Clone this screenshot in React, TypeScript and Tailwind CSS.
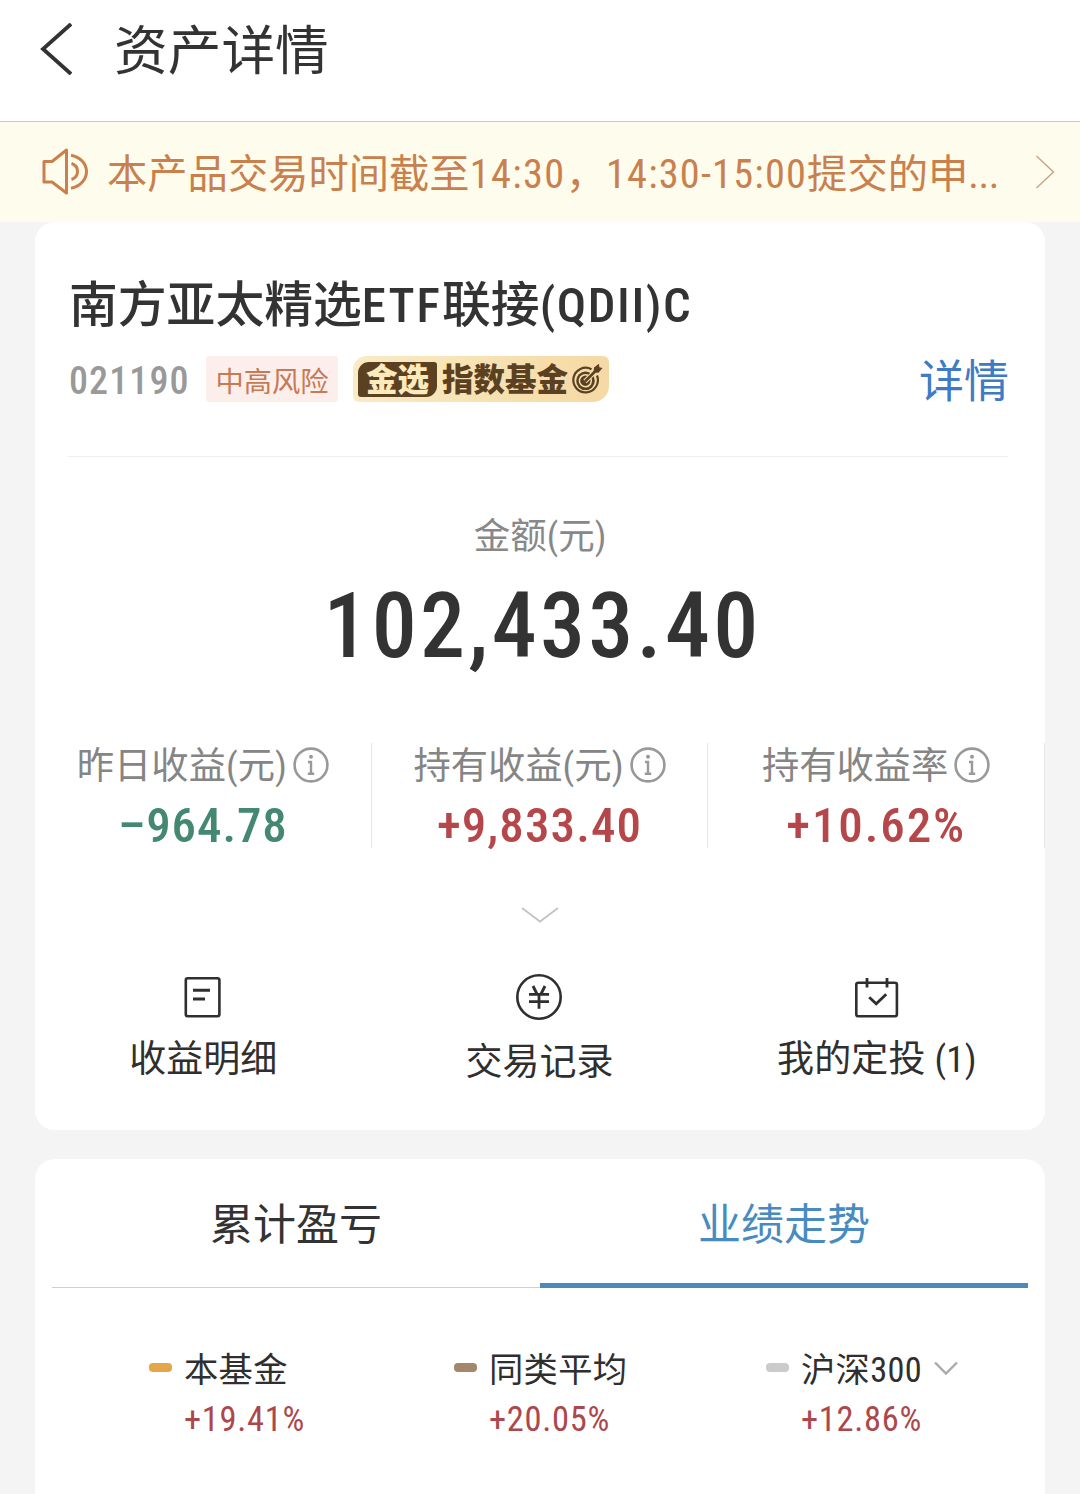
import React from 'react';

interface Stat {
  label: string;
  value: string;
  color: string;
}

interface Legend {
  name: string;
  value: string;
  dot: string;
  pos: string;
  hasMenu?: boolean;
}

const stats: Stat[] = [
  { label: '昨日收益(元)', value: '–964.78', color: 'text-[#44896f] tracking-[0.9px]' },
  { label: '持有收益(元)', value: '+9,833.40', color: 'text-[#b5464a] tracking-[1.1px]' },
  { label: '持有收益率', value: '+10.62%', color: 'text-[#b5464a] tracking-[1.9px]' },
];

const legends: Legend[] = [
  { name: '本基金', value: '+19.41%', dot: 'bg-[#e3a648]', pos: 'w-[305px]' },
  { name: '同类平均', value: '+20.05%', dot: 'bg-[#a3876a]', pos: 'w-[312px]' },
  { name: '沪深300', value: '+12.86%', dot: 'bg-[#cbcbcb]', pos: 'w-[200px]', hasMenu: true },
];

const InfoIcon = () => (
  <svg width="36" height="36" viewBox="0 0 36 36" fill="none" stroke="#999" className="shrink-0">
    <circle cx="18" cy="18" r="16.4" strokeWidth="2.6" />
    <circle cx="18" cy="9.8" r="2" fill="#999" stroke="none" />
    <path d="M15 15h3v11.6M14.8 26.8h6.4" strokeWidth="2.4" />
  </svg>
);

const SpeakerIcon = () => (
  <svg width="48" height="48" viewBox="0 0 48 48" fill="none" stroke="#c9804c" strokeWidth="3" strokeLinejoin="round">
    <path d="M3 13.5h8L25.5 2v43L11 34H3z" />
    <path d="M30 7.2c9 1.8 15.5 8.3 15.5 16.3S39 38.5 30 40.3" />
    <path d="M30.5 15.5c4 1.3 6 4.3 6 8s-2 6.7-6 8" />
  </svg>
);

const TargetIcon = () => (
  <svg width="32" height="32" viewBox="0 0 32 32" fill="none" stroke="#5b4122">
    <path d="M20.5 6.3A12.3 12.3 0 1 0 26 12.5" strokeWidth="2.2" />
    <circle cx="14.5" cy="17.8" r="9.3" fill="#5b4122" stroke="none" />
    <path d="M17.5 12.6a6 6 0 1 0 2.5 3" stroke="#f6dfae" strokeWidth="1.5" />
    <path d="M14 18.5L25 7.5" stroke="#f6dfae" strokeWidth="4.6" />
    <path d="M14 18.5L25.5 7" strokeWidth="2.6" />
    <path d="M22.5 9.5l.5-5L28 .8l.3 3.5 3.2.8-4 4.7z" fill="#5b4122" stroke="none" />
  </svg>
);

const DetailIcon = () => (
  <svg width="46" height="46" viewBox="0 0 46 46" fill="none" stroke="#2f2f2f" strokeWidth="2.6">
    <rect x="5.8" y="4.2" width="33.6" height="38" rx="2" />
    <path d="M13 16.3h17M13 25h12" strokeWidth="3" />
  </svg>
);

const YuanIcon = () => (
  <svg width="46" height="46" viewBox="0 0 46 46" fill="none" stroke="#2f2f2f" strokeWidth="2.6">
    <circle cx="23" cy="23" r="21.7" />
    <path d="M17 12l4 8M29 12l-4 8M13 20.3h20M13 27.6h20M23 20.3v14.5" strokeWidth="2.8" />
  </svg>
);

const PlanIcon = () => (
  <svg width="46" height="46" viewBox="0 0 46 46" fill="none" stroke="#2f2f2f" strokeWidth="2.6">
    <rect x="2.3" y="8.7" width="40.6" height="33.6" rx="2" />
    <path d="M13 4v9.5M33 4v9.5M15.2 23.3l7 6.5 10-9.5" strokeWidth="2.8" />
  </svg>
);

const App: React.FC = () => {
  return (
    <div className="w-[1080px] h-[1494px] overflow-hidden bg-[#f4f4f4] text-[#333] font-['Roboto','Noto_Sans_CJK_SC',sans-serif] [font-stretch:86%]">
      <header className="h-[122px] bg-white border-b border-[#c9c9c9] flex items-start pl-[40px]">
        <svg width="32" height="52" viewBox="0 0 32 52" fill="none" stroke="#333" strokeWidth="3.8" className="mt-[23px]">
          <path d="M31 1L3 26l28 25" />
        </svg>
        <h1 className="ml-[42px] mt-[20px] text-[53.7px] leading-[64px]">资产详情</h1>
      </header>

      <div className="h-[100px] bg-[#fefcec] flex items-center pl-[41px] pr-[25px] text-[#c9804c]">
        <SpeakerIcon />
        <div className="ml-[18px] flex-1 whitespace-nowrap text-[40.3px] leading-[60px] pt-[6px]">
          本产品交易时间截至<span className="tracking-[1.4px]">14:30</span>，<span className="tracking-[1.2px]">14:30-15:00</span>提交的申<span className="tracking-[-0.4px]">...</span>
        </div>
        <svg width="20" height="34" viewBox="0 0 20 34" fill="none" stroke="#c9a184" strokeWidth="1.4">
          <path d="M1.5 1l17 16-17 16" />
        </svg>
      </div>

      <section className="mx-[35px] h-[908px] bg-white rounded-[20px] pt-[51px]">
        <h2 className="pl-[34px] text-[48.8px] leading-[66px] font-medium whitespace-nowrap">南方亚太精选<span className="tracking-[2.1px]">ETF</span>联接<span className="tracking-[1.6px]">(QDII)C</span></h2>

        <div className="mt-[12px] pl-[34px] pr-[36px] h-[56px] flex items-center">
          <span className="w-[137px] text-[38px] leading-[56px] pt-[3px] font-medium text-[#999] tracking-[1.1px]">021190</span>
          <span className="w-[132px] h-[46px] rounded-[3px] bg-[#fbeeeb] text-[#c67a55] text-[28.3px] leading-[53px] text-center">中高风险</span>
          <span className="ml-[15px] w-[256px] h-[46px] flex items-center pl-[5px] rounded-tl-[14px] rounded-tr-[6px] rounded-br-[16px] rounded-bl-[6px] bg-linear-to-r from-[#f9ebc3] to-[#f5d9a4] text-[#5b4122] font-black text-[31.5px]">
            <span className="w-[79px] h-[35px] rounded-tl-[11px] rounded-tr-[3px] rounded-br-[11px] rounded-bl-[3px] bg-[#5b4122] text-[#fbeabb] leading-[37px] text-center">金选</span>
            <span className="ml-[5px] leading-[46px] pt-[3px]">指数基金</span>
            <span className="ml-[3px]"><TargetIcon /></span>
          </span>
          <a className="ml-auto text-[45px] leading-[56px] pt-[8px] text-[#3f7bc4]">详情</a>
        </div>

        <div className="mt-[49px] mx-[33px] mr-[37px] border-t border-[#eee]" />

        <div className="mt-[51px] text-center text-[36.5px] leading-[58px] text-[#888]">金额(元)</div>
        <div className="mt-[9px] h-[104px] pl-[5px] text-center text-[90px] leading-[104px] font-medium tracking-[3.3px]">102,433.40</div>

        <div className="mt-[64px] grid grid-cols-3 h-[105px]">
          {stats.map(s => (
            <div key={s.label} className="h-[105px] border-r border-[#e6e6e6] flex flex-col items-center">
              <div className="flex items-center gap-[6px] h-[44px] text-[37.3px] leading-[44px] text-[#858585] whitespace-nowrap">
                <span className="pt-[2px]">{s.label}</span>
                <InfoIcon />
              </div>
              <div className={`mt-[8px] text-[49px] leading-[62px] font-medium ${s.color}`}>{s.value}</div>
            </div>
          ))}
        </div>

        <svg width="38" height="16" viewBox="0 0 38 16" fill="none" stroke="#c4c4c4" strokeWidth="1.8" className="mx-auto mt-[59px]">
          <path d="M1 1l18 13.5L37 1" />
        </svg>

        <div className="mt-[51px] mr-[1px] grid grid-cols-3 text-[37px] leading-[50px] text-[#2f2f2f]">
          <div className="flex flex-col items-center">
            <DetailIcon />
            <span className="mt-[15px]">收益明细</span>
          </div>
          <div className="flex flex-col items-center">
            <YuanIcon />
            <span className="mt-[18px]">交易记录</span>
          </div>
          <div className="flex flex-col items-center pl-[2px]">
            <PlanIcon />
            <span className="mt-[15px] whitespace-pre tracking-[0.2px]">我的定投 (1)</span>
          </div>
        </div>
      </section>

      <section className="mt-[29px] mx-[35px] h-[360px] bg-white rounded-t-[20px]">
        <div className="mx-[17px] flex text-[43px] leading-[60px] text-center">
          <div className="flex-1 h-[129px] pt-[36px] border-b border-[#d0d0d0]">累计盈亏</div>
          <div className="flex-1 h-[129px] pt-[36px] border-b-[5px] border-[#4d8aba] text-[#478bc1]">业绩走势</div>
        </div>

        <div className="mt-[57px] pl-[114px] flex">
          {legends.map(l => (
            <div key={l.name} className={l.pos}>
              <div className="flex items-center text-[34.3px] leading-[50px] text-[#2f2f2f] whitespace-nowrap">
                <i className={`block w-[23px] h-[9px] mr-[12px] mb-[5px] rounded-[4px] ${l.dot}`} />
                <span className="tracking-[0.3px]">{l.name}</span>
                {l.hasMenu && (
                  <svg width="24" height="15" viewBox="0 0 24 15" fill="none" stroke="#aaa" strokeWidth="2.4" className="ml-[12px] mb-[3px]">
                    <path d="M1 1.5l11 11 11-11" />
                  </svg>
                )}
              </div>
              <div className="pl-[35px] text-[34.5px] leading-[48px] tracking-[0.7px] text-[#ac484b]">{l.value}</div>
            </div>
          ))}
        </div>
      </section>
    </div>
  );
};

export default App;
